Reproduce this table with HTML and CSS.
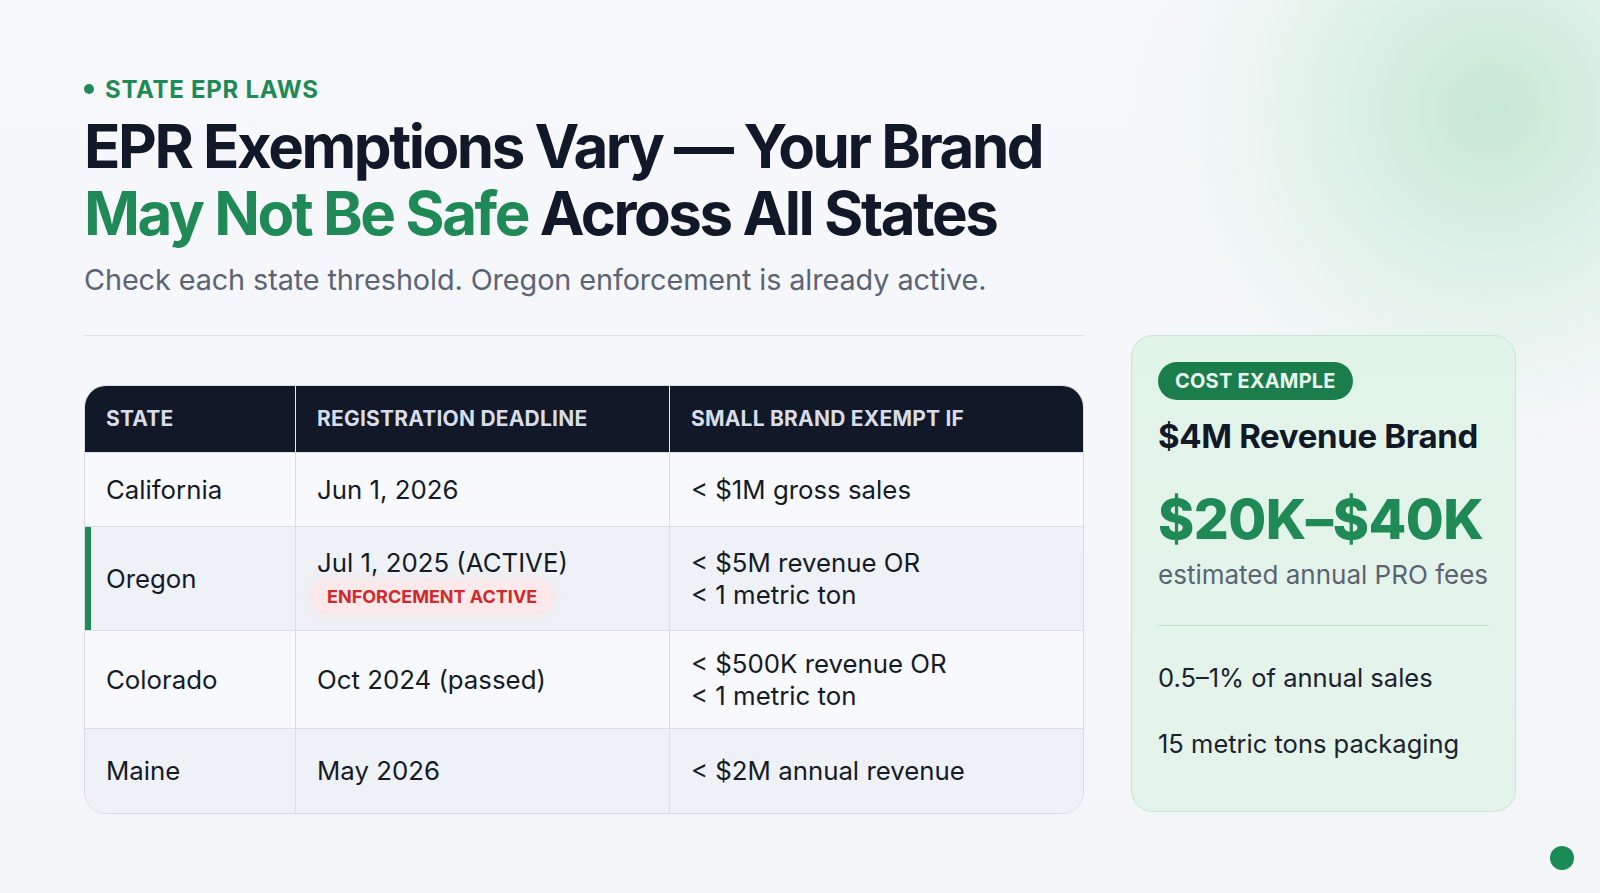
FILE: index.html
```html
<!DOCTYPE html>
<html lang="en">
<head>
<meta charset="utf-8">
<title>State EPR Laws</title>
<link rel="stylesheet" href="styles.css">
</head>
<body>
<div class="slide">
  <div class="glow"></div>
  <header class="intro">
    <div class="eyebrow"><span class="eyebrow-dot"></span>STATE EPR LAWS</div>
    <h1 class="title"><span class="line">EPR Exemptions Vary — Your Brand</span><span class="line"><span class="accent">May Not Be Safe</span> Across All States</span></h1>
    <p class="subtitle">Check each state threshold. Oregon enforcement is already active.</p>
  </header>
  <div class="content">
    <section class="table-col">
      <div class="table">
        <div class="row head">
          <div class="cell c1">STATE</div>
          <div class="cell c2">REGISTRATION DEADLINE</div>
          <div class="cell c3">SMALL BRAND EXEMPT IF</div>
        </div>
        <div class="row r-ca">
          <div class="cell c1">California</div>
          <div class="cell c2">Jun 1, 2026</div>
          <div class="cell c3">&lt; $1M gross sales</div>
        </div>
        <div class="row r-or alt active">
          <div class="cell c1">Oregon</div>
          <div class="cell c2">
            <div>Jul 1, 2025 (ACTIVE)</div>
            <span class="enforce">ENFORCEMENT ACTIVE</span>
          </div>
          <div class="cell c3">&lt; $5M revenue OR<br>&lt; 1 metric ton</div>
        </div>
        <div class="row r-co">
          <div class="cell c1">Colorado</div>
          <div class="cell c2">Oct 2024 (passed)</div>
          <div class="cell c3">&lt; $500K revenue OR<br>&lt; 1 metric ton</div>
        </div>
        <div class="row r-me alt">
          <div class="cell c1">Maine</div>
          <div class="cell c2">May 2026</div>
          <div class="cell c3">&lt; $2M annual revenue</div>
        </div>
      </div>
    </section>
    <aside class="card">
      <span class="pill">COST EXAMPLE</span>
      <h2 class="card-title">$4M Revenue Brand</h2>
      <div class="big">$20K–$40K</div>
      <div class="big-note">estimated annual PRO fees</div>
      <div class="card-rule"></div>
      <div class="fact">0.5–1% of annual sales</div>
      <div class="fact">15 metric tons packaging</div>
    </aside>
  </div>
  <span class="corner-dot"></span>
</div>
</body>
</html>
```

FILE: styles.css
```css
* { box-sizing: border-box; }
html, body { margin: 0; padding: 0; }
body {
  width: 1600px;
  height: 893px;
  overflow: hidden;
  font-family: Inter, "Noto Sans", sans-serif;
  color: #111827;
  background: #f5f7fa;
}
.slide {
  position: relative;
  width: 1600px;
  height: 893px;
  padding: 76px 84px 0 84px;
  background: linear-gradient(180deg, #f6f8fb 0%, #f3f5f9 100%);
  overflow: hidden;
}
.glow {
  position: absolute;
  right: -250px;
  top: -250px;
  width: 720px;
  height: 720px;
  border-radius: 50%;
  background: radial-gradient(circle, rgba(196, 231, 210, 0.95) 0%, rgba(206, 236, 218, 0.7) 25%, rgba(225, 243, 232, 0.4) 50%, rgba(240, 247, 244, 0.1) 65%, rgba(245, 248, 250, 0) 72%);
  pointer-events: none;
}
.intro { position: relative; }
.eyebrow {
  display: flex;
  align-items: center;
  height: 26px;
  font-size: 24px;
  font-weight: 700;
  letter-spacing: 0.03em;
  color: #1f8a55;
}
.eyebrow-dot {
  width: 10px;
  height: 10px;
  border-radius: 50%;
  background: #1f8a55;
  margin-right: 11px;
}
.title {
  margin: 11px 0 0 0;
  font-size: 60px;
  line-height: 67px;
  font-weight: 700;
  letter-spacing: -0.041em;
  color: #111827;
}
.title .line { display: block; white-space: nowrap; }
.accent { color: #1f8a55; }
.subtitle {
  margin: 15px 0 0 0;
  font-size: 28.8px;
  line-height: 36px;
  font-weight: 400;
  letter-spacing: -0.003em;
  color: #5b6474;
}
.content {
  position: relative;
  display: flex;
  gap: 47px;
  margin-top: 37px;
}
.table-col {
  width: 1000px;
  border-top: 1px solid #dde2ea;
  padding-top: 49px;
}
.table {
  border: 1px solid #d6dce5;
  border-radius: 22px;
  overflow: hidden;
  background: #f7f9fc;
}
.row {
  display: grid;
  grid-template-columns: 210px 374px 1fr;
  border-top: 1px solid #d9dee6;
}
.row.head {
  border-top: none;
  background: #111827;
  height: 66px;
}
.row.alt { background: #eef1f6; }
.row.active { box-shadow: inset 6px 0 0 #1f8a55; }
.r-ca { height: 74px; }
.r-or { height: 104px; }
.r-co { height: 98px; }
.r-me { height: 85px; }
.cell {
  display: flex;
  flex-direction: column;
  justify-content: center;
  padding: 0 21px;
  font-size: 25.8px;
  line-height: 32px;
  color: #151b26;
}
.cell + .cell { border-left: 1px solid #d9dee6; }
.head .cell {
  font-size: 21px;
  font-weight: 700;
  letter-spacing: 0.01em;
  color: #d7dde8;
}
.head .cell + .cell { border-left: 1px solid #e3e7ee; }
.enforce {
  align-self: flex-start;
  margin-top: 4px;
  margin-left: -4px;
  padding: 2px 14px;
  border-radius: 14px;
  background: #fde9e9;
  box-shadow: 0 0 8px 3px rgba(253, 226, 226, 0.9);
  font-size: 18px;
  line-height: 24px;
  font-weight: 700;
  color: #cf2a2e;
}
.card {
  width: 385px;
  height: 477px;
  border: 1px solid #c7e6d3;
  border-radius: 22px;
  background: linear-gradient(180deg, #e2f3e8 0%, #e4f4ea 100%);
  padding: 26px 26px 0 26px;
  display: flex;
  flex-direction: column;
  align-items: flex-start;
}
.pill {
  display: inline-block;
  height: 38px;
  line-height: 38px;
  padding: 0 17px;
  border-radius: 19px;
  background: #1a7d4b;
  color: #e9f7ee;
  font-size: 20px;
  font-weight: 700;
  letter-spacing: 0.01em;
}
.card-title {
  margin: 16px 0 0 0;
  font-size: 33px;
  line-height: 40px;
  font-weight: 700;
  letter-spacing: -0.01em;
  color: #111827;
}
.big {
  margin-top: 30px;
  font-size: 55px;
  line-height: 66px;
  font-weight: 800;
  letter-spacing: -0.01em;
  white-space: nowrap;
  color: #1f8a55;
}
.big-note {
  margin-top: 6px;
  font-size: 26px;
  line-height: 34px;
  white-space: nowrap;
  color: #5b6474;
}
.card-rule {
  align-self: stretch;
  height: 1px;
  background: #c3e1cf;
  margin-top: 33px;
}
.fact {
  font-size: 25.5px;
  line-height: 34px;
  color: #1b2230;
  margin-top: 35px;
  white-space: nowrap;
}
.fact + .fact { margin-top: 32px; }
.corner-dot {
  position: absolute;
  left: 1550px;
  top: 846px;
  width: 24px;
  height: 24px;
  border-radius: 50%;
  background: #1a8a57;
}
```
